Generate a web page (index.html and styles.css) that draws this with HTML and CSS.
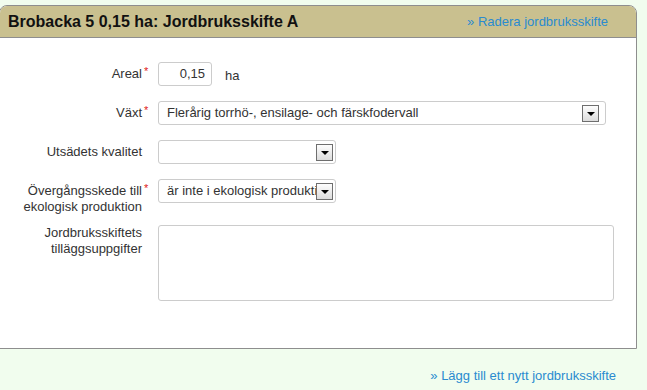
FILE: index.html
```html
<!DOCTYPE html>
<html lang="sv">

<head>
    <meta charset="UTF-8">
    <title>Jordbruksskifte</title>
    <link rel="stylesheet" href="styles.css">
</head>

<body>
    <div class="panel">
        <div class="panel-head">
            <h2>Brobacka 5 0,15 ha: Jordbruksskifte A</h2>
            <a href="#" class="link">» Radera jordbruksskifte</a>
        </div>

        <div class="panel-body">
            <div class="row">
                <label class="label"><span>Areal<i class="req">*</i></span></label>
                <div class="input num">0,15</div>
                <span class="unit">ha</span>
            </div>

            <div class="row">
                <label class="label"><span>Växt<i class="req">*</i></span></label>
                <div class="select wide">
                    <span class="value">Flerårig torrhö-, ensilage- och färskfodervall</span>
                    <span class="arrow"></span>
                </div>
            </div>

            <div class="row">
                <label class="label"><span>Utsädets kvalitet</span></label>
                <div class="select">
                    <span class="value"></span>
                    <span class="arrow"></span>
                </div>
            </div>

            <div class="row tall">
                <label class="label"><span>Övergångsskede till<i class="req">*</i><br>ekologisk produktion</span></label>
                <div class="select">
                    <span class="value">är inte i ekologisk produktion</span>
                    <span class="arrow"></span>
                </div>
            </div>

            <div class="row">
                <label class="label top"><span>Jordbruksskiftets<br>tilläggsuppgifter</span></label>
                <div class="textarea"></div>
            </div>
        </div>
    </div>

    <div class="foot">
        <a href="#" class="link">» Lägg till ett nytt jordbruksskifte</a>
    </div>
</body>

</html>
```

FILE: styles.css
```css
body {
    margin: 0;
    padding: 0;
    background: #f1fdee;
    font-family: "Liberation Sans", Arial, sans-serif;
    font-size: 13px;
    color: #333;
}

.link {
    color: #2a8bd0;
    text-decoration: none;
    font-size: 13px;
}

.panel {
    width: 636px;
    margin: 5px 0 0 -1px;
    border: 1px solid #8e8e8e;
    border-radius: 8px 8px 0 0;
    background: #fff;
}

.panel-head {
    height: 31px;
    display: flex;
    align-items: center;
    justify-content: space-between;
    padding: 0 28px 0 8px;
    background: #c9c08f;
    border-bottom: 1px solid #8e8e8e;
    border-radius: 7px 7px 0 0;
}

.panel-head h2 {
    margin: 0;
    font-size: 16px;
    font-weight: bold;
    color: #111;
}

.panel-body {
    height: 286px;
    padding-top: 24px;
}

.row {
    display: flex;
    align-items: flex-start;
    margin-bottom: 15px;
}

.row.tall {
    margin-bottom: 10px;
}

.label {
    width: 142px;
    margin-right: 16px;
    padding-top: 4px;
    text-align: right;
    line-height: 16px;
    flex-shrink: 0;
}

.label.top {
    padding-top: 0;
}

.req {
    position: absolute;
    font-style: normal;
    color: #e02020;
    font-size: 11px;
    line-height: 10px;
    margin-left: 2px;
}

.input {
    box-sizing: border-box;
    width: 54px;
    height: 24px;
    border: 1px solid #ccc;
    border-radius: 3px;
    line-height: 22px;
    padding: 0 6px;
}

.input.num {
    text-align: right;
}

.unit {
    margin: 4px 0 0 13px;
    line-height: 16px;
    padding-top: 2px;
}

.select {
    position: relative;
    box-sizing: border-box;
    width: 178px;
    height: 24px;
    border: 1px solid #ccc;
    border-radius: 3px;
    padding: 0 19px 0 8px;
    line-height: 22px;
    white-space: nowrap;
    overflow: hidden;
}

.select.wide {
    width: 448px;
}

.select .value {
    display: block;
    overflow: hidden;
}

.arrow {
    position: absolute;
    right: 2px;
    top: 3px;
    box-sizing: border-box;
    width: 17px;
    height: 17px;
    border: 1px solid #6e6e6e;
    background: linear-gradient(#fdfdfd, #dcdcdc);
}

.arrow::after {
    content: '';
    position: absolute;
    left: 4px;
    top: 6px;
    border-left: 4px solid transparent;
    border-right: 4px solid transparent;
    border-top: 4px solid #000;
}

.wide .arrow {
    right: 6px;
}

.textarea {
    box-sizing: border-box;
    width: 456px;
    height: 76px;
    border: 1px solid #ccc;
    border-radius: 3px;
}

.foot {
    width: 616px;
    margin-top: 19px;
    text-align: right;
}
```
